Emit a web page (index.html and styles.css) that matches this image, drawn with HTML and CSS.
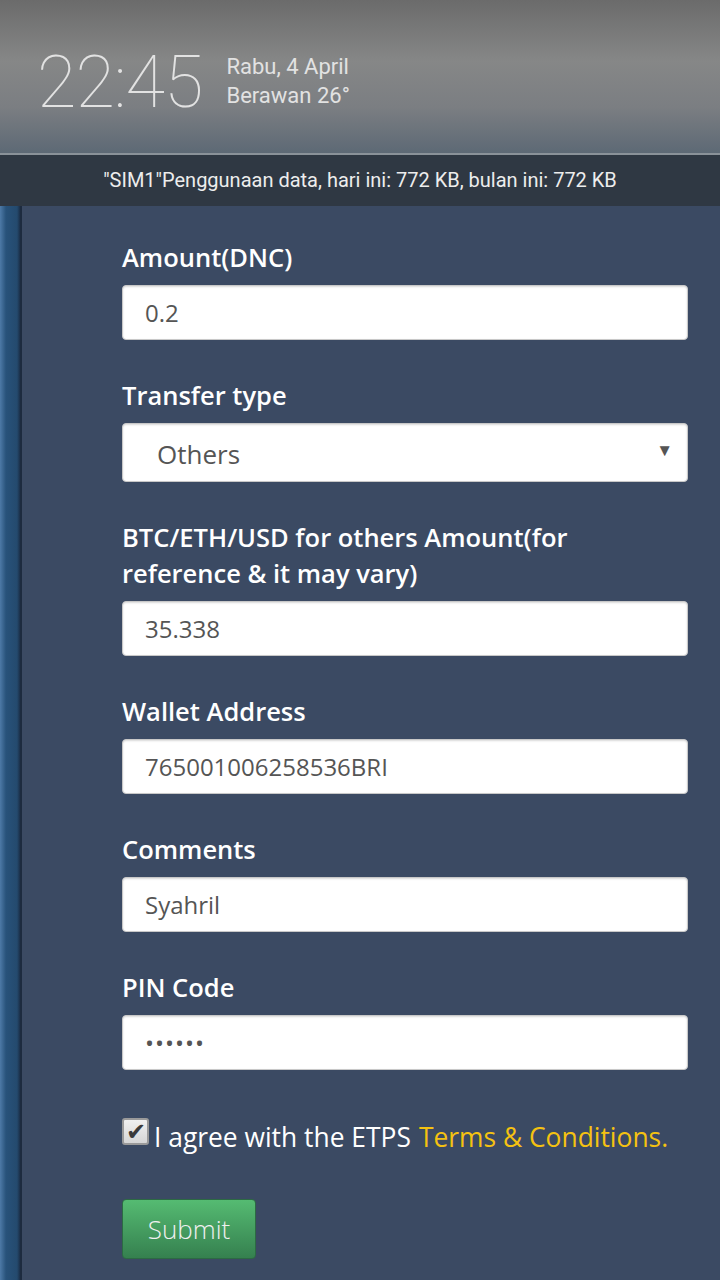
FILE: index.html
```html
<!DOCTYPE html>
<html lang="en">
<head>
  <meta charset="utf-8">
  <title>Transfer</title>
  <link rel="stylesheet" href="styles.css">
</head>
<body>
  <!-- Lock screen overlay -->
  <div class="status">
    <div class="clock">
      <span class="time">22:45</span>
      <div class="date">
        <div>Rabu, 4 April</div>
        <div>Berawan 26°</div>
      </div>
    </div>
  </div>
  <div class="usage">"SIM1"Penggunaan data, hari ini: 772 KB, bulan ini: 772 KB</div>

  <div class="page">
    <div class="side"></div>
    <form class="form">
      <div class="field">
        <label>Amount(DNC)</label>
        <input type="text" value="0.2">
      </div>
      <div class="field">
        <label>Transfer type</label>
        <div class="select">
          <span>Others</span>
          <span class="arrow">▼</span>
        </div>
      </div>
      <div class="field">
        <label>BTC/ETH/USD for others Amount(for reference &amp; it may vary)</label>
        <input type="text" value="35.338">
      </div>
      <div class="field">
        <label>Wallet Address</label>
        <input type="text" value="765001006258536BRI">
      </div>
      <div class="field">
        <label>Comments</label>
        <input type="text" value="Syahril">
      </div>
      <div class="field">
        <label>PIN Code</label>
        <input type="text" value="••••••" class="pin">
      </div>
      <div class="agree">
        <span class="check">✔</span>I agree with the ETPS <a href="#">Terms &amp; Conditions.</a>
      </div>
      <button type="button" class="submit">Submit</button>
    </form>
  </div>
</body>
</html>
```

FILE: styles.css
```css
body { margin: 0; font-family: "Open Sans", sans-serif; background: #3b4a63; }
.status { height: 155px; background: linear-gradient(#6b6b6b, #868787 40%, #7b7e82 70%, #5d6975); border-bottom: 2px solid #8a9299; box-sizing: border-box; }
.clock { display: flex; align-items: center; padding: 48px 0 0 37px; font-family: Roboto, sans-serif; color: #e2e2e2; }
.time { font-size: 72px; font-weight: 100; line-height: 70px; letter-spacing: -1px; }
.date { margin-left: 24px; font-size: 22px; line-height: 29px; margin-top: -4px; }
.usage { height: 51px; background: #2f3843; color: #ededed; font-family: Roboto, sans-serif; font-size: 20px; text-align: center; line-height: 50px; }
.page { display: flex; min-height: 1074px; }
.side { width: 20px; background: linear-gradient(90deg, #4e7aa7, #28527a 30%, #244a6e 85%, #1b2f48); border-right: 2px solid #1d2b3f; flex-shrink: 0; }
.form { padding: 33px 32px 0 100px; flex: 1; }
.field { margin-bottom: 37px; }
.field label { display: block; color: #fff; font-size: 25.5px; font-weight: 600; line-height: 36px; margin-bottom: 10px; }
.field input, .select { display: block; width: 100%; box-sizing: border-box; height: 55px; border: 1px solid #c8c8c8; border-radius: 4px; background: #fff; font-family: "Open Sans", sans-serif; font-size: 24px; color: #555; padding: 0 22px; box-shadow: inset 0 1px 2px rgba(0,0,0,0.15); }
.select { height: 59px; display: flex; align-items: center; justify-content: space-between; padding: 2px 14px 0 34px; font-size: 26px; }
.arrow { font-size: 17px; color: #555; margin-top: -8px; }
.pin { letter-spacing: 1px; font-size: 22px; }
.agree { color: #fff; font-size: 26.4px; display: flex; align-items: center; margin-top: 49px; line-height: 36px; }
.agree a { color: #f5c211; text-decoration: none; margin-left: 8px; }
.check { width: 27px; height: 27px; box-sizing: border-box; border: 2px solid #9a9a9a; border-radius: 3px; background: linear-gradient(#f0f0f0, #d6d6d6); color: #3a3a3a; font-size: 24px; line-height: 22px; text-align: center; margin-right: 5px; margin-top: -11px; flex-shrink: 0; }
.submit { display: block; margin-top: 44px; width: 134px; height: 60px; border: 1px solid #2c6a43; border-radius: 4px; background: linear-gradient(#55bb72, #35804f); color: #f0f0f0; font-family: "Open Sans", sans-serif; font-size: 26px; font-weight: 300; }
```
